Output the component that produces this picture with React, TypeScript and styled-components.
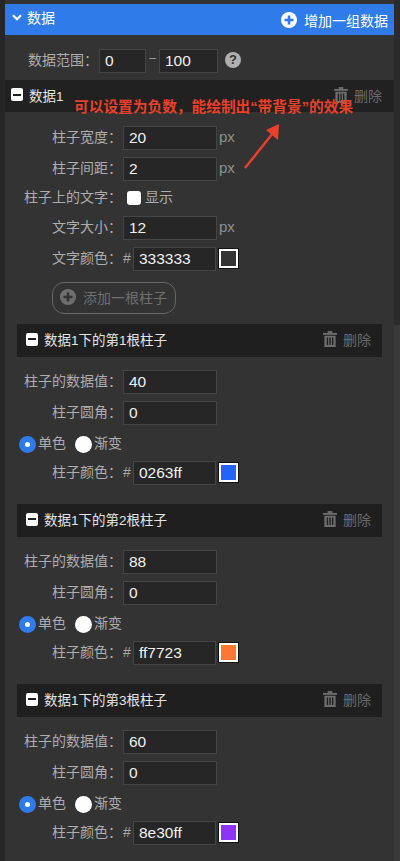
import * as React from "react";
import styled, { createGlobalStyle } from "styled-components";

const GlobalStyle = createGlobalStyle`
  html, body {
    margin: 0;
    padding: 0;
    background: #262626;
  }
  body {
    font-family: "Liberation Sans", "Noto Sans CJK SC", sans-serif;
  }
`;

const Page = styled.div`
  position: relative;
  width: 400px;
  height: 861px;
  overflow: hidden;
  background: #262626;
  display: flex;
  padding-left: 5px;
  box-sizing: border-box;
`;

const Panel = styled.div`
  width: 389px;
  height: 861px;
  padding-top: 4px;
  box-sizing: border-box;
  background: #333333;
`;

const ScrollTrack = styled.div`
  flex: 1;
  display: flex;
  flex-direction: column;
  padding-top: 325px;
  background: #2b2b2b;
`;

const ScrollThumb = styled.div`
  height: 536px;
  background: #3a3a3a;
`;

const TitleBar = styled.div`
  height: 31px;
  display: flex;
  align-items: center;
  justify-content: space-between;
  padding: 0 6px 0 7px;
  background: #2f7bea;
  color: #ffffff;
  font-size: 14px;
`;

const TitleLeft = styled.div`
  display: flex;
  align-items: center;
  gap: 5px;
  margin-top: -5px;
`;

const TitleRight = styled.div`
  display: flex;
  align-items: center;
  gap: 7px;
  margin-top: 1px;
`;

const Row = styled.div<{ $top?: number }>`
  display: flex;
  align-items: center;
  height: 24px;
  margin-top: ${(p) => p.$top ?? 7}px;
`;

const Label = styled.div<{ $width?: number }>`
  width: ${(p) => p.$width ?? 117}px;
  margin-right: 1px;
  flex-shrink: 0;
  text-align: right;
  font-size: 14px;
  color: #adadad;
  white-space: nowrap;
  margin-top: -4px;
`;

const Input = styled.div<{ $width?: number }>`
  width: ${(p) => p.$width ?? 94}px;
  height: 24px;
  box-sizing: border-box;
  padding: 1px 0 0 5px;
  border: 1px solid #454545;
  background: #262626;
  color: #f0f0f0;
  font-size: 15.5px;
  line-height: 20px;
`;

const Unit = styled.span`
  margin-left: 2px;
  color: #8f8f8f;
  font-size: 15px;
  margin-top: -4px;
`;

const Dash = styled.span`
  width: 13px;
  text-align: center;
  color: #a0a0a0;
  font-size: 12px;
  margin-top: -6px;
`;

const HelpDot = styled.div`
  margin-left: 7px;
  margin-top: -3px;
  width: 16px;
  height: 16px;
  border-radius: 50%;
  background: #b0b0b0;
  color: #333333;
  font-size: 13px;
  font-weight: 700;
  line-height: 16px;
  text-align: center;
`;

const GroupHeader = styled.div<{ $inset?: boolean }>`
  height: ${(p) => (p.$inset ? 33 : 32)}px;
  margin: ${(p) => (p.$inset ? "0 12px" : "7px 0 0")};
  padding: ${(p) => (p.$inset ? "0 11px 0 9px" : "0 12px 0 6px")};
  display: flex;
  align-items: center;
  justify-content: space-between;
  background: ${(p) => (p.$inset ? "#1f1f1f" : "#212121")};
  color: #e4e4e4;
  font-size: 13.5px;
`;

const HeaderTitle = styled.div`
  display: flex;
  align-items: center;
  gap: 6px;
  margin-top: -3px;
`;

const MinusBox = styled.span`
  width: 12px;
  height: 13px;
  border-radius: 2px;
  background: #ffffff;
  display: flex;
  align-items: center;
  justify-content: center;
  &::after {
    content: "";
    width: 8px;
    height: 2px;
    background: #1f1f1f;
  }
`;

const DeleteAction = styled.div`
  display: flex;
  align-items: center;
  gap: 6px;
  color: #6a6a6a;
  font-size: 14px;
  margin-top: -3px;
`;

const CheckBox = styled.span`
  width: 14px;
  height: 14px;
  border-radius: 3px;
  background: #ffffff;
  margin: 0 4px 0 4px;
`;

const OptionText = styled.span`
  color: #adadad;
  font-size: 14px;
  margin-top: -4px;
`;

const Swatch = styled.span<{ $color: string }>`
  width: 15px;
  height: 15px;
  margin: -1px 0 0 3px;
  border: 2px solid #ffffff;
  outline: 1px solid #111111;
  background: ${(p) => p.$color};
`;

const Hash = styled.span`
  width: 10px;
  color: #a8a8a8;
  font-size: 14px;
  margin-top: -3px;
`;

const AddButton = styled.div`
  width: 124px;
  height: 32px;
  margin: 11px 0 10px 47px;
  box-sizing: border-box;
  padding: 0 0 2px 7px;
  display: flex;
  align-items: center;
  gap: 7px;
  border: 1px solid #666666;
  border-radius: 12px;
  color: #6f6f6f;
  font-size: 14px;
`;

const RadioRow = styled.div`
  display: flex;
  align-items: center;
  height: 18px;
  margin: 10px 0 8px 14px;
`;

const Radio = styled.span<{ $checked?: boolean }>`
  width: 17px;
  height: 17px;
  border-radius: 50%;
  box-sizing: border-box;
  background: ${(p) => (p.$checked ? "#2f7bea" : "#ffffff")};
  display: flex;
  align-items: center;
  justify-content: center;
  margin-right: 2px;
  &::after {
    content: "";
    display: ${(p) => (p.$checked ? "block" : "none")};
    width: 5px;
    height: 5px;
    border-radius: 50%;
    background: #ffffff;
  }
`;

const RadioGap = styled.span`
  width: 9px;
`;

const BarBlock = styled.div`
  padding-bottom: 19px;
`;

const Note = styled.div`
  position: absolute;
  left: 74px;
  top: 98px;
  color: #e8402a;
  font-size: 14.7px;
  font-weight: 700;
  white-space: nowrap;
  line-height: 18px;
`;

const NoteArrow = styled.svg`
  position: absolute;
  left: 240px;
  top: 120px;
`;

const PlusIcon = ({ size, fg, bg }: { size: number; fg: string; bg: string }) => (
  <svg width={size} height={size} viewBox="0 0 16 16">
    <circle cx="8" cy="8" r="8" fill={bg} />
    <rect x="3.5" y="6.7" width="9" height="2.6" fill={fg} />
    <rect x="6.7" y="3.5" width="2.6" height="9" fill={fg} />
  </svg>
);

const TrashIcon = () => (
  <svg width="14" height="16" viewBox="0 0 15 17" fill="#6e6e6e">
    <rect x="0" y="2" width="15" height="2" />
    <rect x="5" y="0" width="5" height="2" />
    <path d="M1.5 5h12v12h-12z M4 7v8h1.5V7z M6.8 7v8h1.5V7z M9.6 7v8h1.5V7z" fillRule="evenodd" />
  </svg>
);

const Chevron = () => (
  <svg width="10" height="7" viewBox="0 0 10 7">
    <path d="M1 1.2 5 5.2 9 1.2" fill="none" stroke="#ffffff" strokeWidth="2.2" />
  </svg>
);

const bars = [
  { value: "40", color: "0263ff", swatch: "#2464fb" },
  { value: "88", color: "ff7723", swatch: "#ff7833" },
  { value: "60", color: "8e30ff", swatch: "#8c34f8" },
];

const Bar = ({ index, value, color, swatch }: { index: number; value: string; color: string; swatch: string }) => (
  <BarBlock>
    <GroupHeader $inset>
      <HeaderTitle>
        <MinusBox />
        数据1下的第{index}根柱子
      </HeaderTitle>
      <DeleteAction>
        <TrashIcon />
        删除
      </DeleteAction>
    </GroupHeader>
    <Row $top={13}>
      <Label>柱子的数据值：</Label>
      <Input>{value}</Input>
    </Row>
    <Row>
      <Label>柱子圆角：</Label>
      <Input>0</Input>
    </Row>
    <RadioRow>
      <Radio $checked />
      <OptionText>单色</OptionText>
      <RadioGap />
      <Radio />
      <OptionText>渐变</OptionText>
    </RadioRow>
    <Row $top={0}>
      <Label>柱子颜色：</Label>
      <Hash>#</Hash>
      <Input $width={83}>{color}</Input>
      <Swatch $color={swatch} />
    </Row>
  </BarBlock>
);

export default function App() {
  return (
    <Page>
      <GlobalStyle />
      <Panel>
        <TitleBar>
          <TitleLeft>
            <Chevron />
            数据
          </TitleLeft>
          <TitleRight>
            <PlusIcon size={16} fg="#2f7bea" bg="#ffffff" />
            增加一组数据
          </TitleRight>
        </TitleBar>
        <Row $top={14}>
          <Label $width={93}>数据范围：</Label>
          <Input $width={47}>0</Input>
          <Dash>–</Dash>
          <Input $width={59}>100</Input>
          <HelpDot>?</HelpDot>
        </Row>
        <GroupHeader>
          <HeaderTitle>
            <MinusBox />
            数据1
          </HeaderTitle>
          <DeleteAction>
            <TrashIcon />
            删除
          </DeleteAction>
        </GroupHeader>
        <Row $top={14}>
          <Label>柱子宽度：</Label>
          <Input>20</Input>
          <Unit>px</Unit>
        </Row>
        <Row>
          <Label>柱子间距：</Label>
          <Input>2</Input>
          <Unit>px</Unit>
        </Row>
        <Row $top={5}>
          <Label>柱子上的文字：</Label>
          <CheckBox />
          <OptionText>显示</OptionText>
        </Row>
        <Row $top={6}>
          <Label>文字大小：</Label>
          <Input>12</Input>
          <Unit>px</Unit>
        </Row>
        <Row>
          <Label>文字颜色：</Label>
          <Hash>#</Hash>
          <Input $width={83}>333333</Input>
          <Swatch $color="#333333" />
        </Row>
        <AddButton>
          <PlusIcon size={16} fg="#333333" bg="#6f6f6f" />
          添加一根柱子
        </AddButton>
        {bars.map((bar, i) => (
          <Bar key={bar.color} index={i + 1} value={bar.value} color={bar.color} swatch={bar.swatch} />
        ))}
      </Panel>
      <ScrollTrack>
        <ScrollThumb />
      </ScrollTrack>
      <Note>可以设置为负数，能绘制出“带背景”的效果</Note>
      <NoteArrow width="44" height="52" viewBox="0 0 44 52">
        <line x1="5" y1="48" x2="33" y2="13" stroke="#e8402a" strokeWidth="2.4" />
        <polygon points="39,4 38,20 26,10" fill="#e8402a" />
      </NoteArrow>
    </Page>
  );
}
